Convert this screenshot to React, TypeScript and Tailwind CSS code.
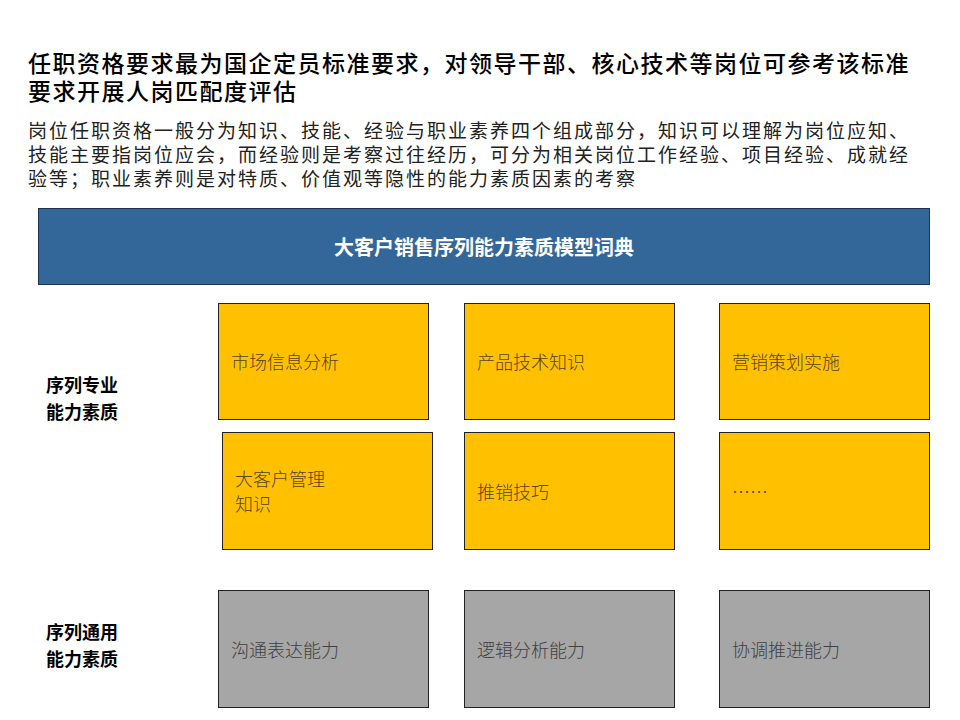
import React from "react";

const font = { fontFamily: '"Noto Sans CJK SC", "Noto Sans", sans-serif' };

function Box({ text, gray, className = "" }: { text: React.ReactNode; gray?: boolean; className?: string }) {
  return (
    <div
      className={`w-[211px] flex items-center pl-3 border border-[#222] text-[18px] leading-[25px] font-light ${
        gray ? "bg-[#a6a6a6] text-[#404040]" : "bg-[#ffc000] text-[#5a4420]"
      } ${className}`}
    >
      {text}
    </div>
  );
}

export default function App() {
  return (
    <div className="w-[960px] h-[720px] bg-white relative overflow-hidden" style={font}>
      <div className="pl-[28px] pt-[48px] w-[920px]">
        <h1 className="text-[23px] leading-[28px] tracking-[1.5px] font-medium text-black">
          任职资格要求最为国企定员标准要求，对领导干部、核心技术等岗位可参考该标准要求开展人岗匹配度评估
        </h1>
        <p className="mt-[14px] text-[19px] leading-[24px] tracking-[2px] text-[#222]">
          岗位任职资格一般分为知识、技能、经验与职业素养四个组成部分，知识可以理解为岗位应知、技能主要指岗位应会，而经验则是考察过往经历，可分为相关岗位工作经验、项目经验、成就经验等；职业素养则是对特质、价值观等隐性的能力素质因素的考察
        </p>
      </div>
      <div className="ml-[38px] mt-[18px] w-[892px] h-[77px] bg-[#336699] border border-[#1f3350] flex items-center justify-center text-white text-[20px] font-bold">
        大客户销售序列能力素质模型词典
      </div>
      <div className="flex mt-[18px]">
        <div className="w-[218px] pl-[46px] pt-[68px] text-[18px] leading-[27px] font-bold text-black">
          序列专业<br />能力素质
        </div>
        <div className="flex flex-col gap-[12px]">
          <div className="flex h-[117px]">
            <Box text="市场信息分析" />
            <Box text="产品技术知识" className="ml-[35px]" />
            <Box text="营销策划实施" className="ml-[44px]" />
          </div>
          <div className="flex h-[118px]">
            <Box text={<span>大客户管理<br />知识</span>} className="ml-[4px]" />
            <Box text="推销技巧" className="ml-[31px]" />
            <Box text="……" className="ml-[44px]" />
          </div>
        </div>
      </div>
      <div className="flex mt-[40px]">
        <div className="w-[218px] pl-[46px] pt-[28px] text-[18px] leading-[27px] font-bold text-black">
          序列通用<br />能力素质
        </div>
        <div className="flex h-[118px]">
          <Box gray text="沟通表达能力" />
          <Box gray text="逻辑分析能力" className="ml-[35px]" />
          <Box gray text="协调推进能力" className="ml-[44px]" />
        </div>
      </div>
    </div>
  );
}
